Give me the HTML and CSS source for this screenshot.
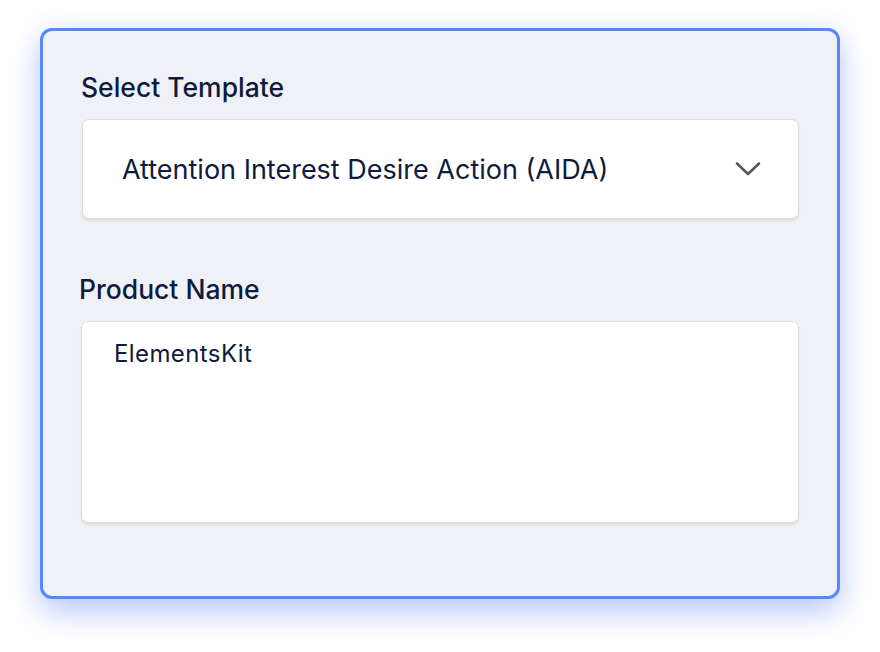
FILE: index.html
```html
<!DOCTYPE html>
<html lang="en">
<head>
<meta charset="utf-8">
<title>Template form</title>
<link rel="stylesheet" href="styles.css">
</head>
<body>
<div class="page">
  <div class="card">
    <div class="field">
      <div class="label label-first">Select Template</div>
      <div class="select">
        <span class="select-text">Attention Interest Desire Action (AIDA)</span>
        <svg class="chevron" width="26" height="16" viewBox="0 0 26 16" aria-hidden="true">
          <path d="M2 2.5 L13 13 L24 2.5" fill="none" stroke="#55575e" stroke-width="2.6" stroke-linecap="round" stroke-linejoin="round"/>
        </svg>
      </div>
    </div>
    <div class="field field-second">
      <div class="label label-second">Product Name</div>
      <div class="textarea">ElementsKit</div>
    </div>
  </div>
</div>
</body>
</html>
```
FILE: styles.css
```css
html, body {
  margin: 0;
  padding: 0;
  background: #ffffff;
}
.page {
  padding: 28px 40px 53px 40px;
  font-family: Inter, "Noto Sans", sans-serif;
  color: #0e1b3d;
}
.card {
  box-sizing: border-box;
  width: 800px;
  height: 571px;
  border: 3px solid #5588ff;
  border-radius: 12px;
  background: #f0f1f7;
  padding: 40px 38px 0 39px;
  box-shadow: 0 14px 30px rgba(90, 130, 255, 0.38), 0 0 24px rgba(120, 150, 255, 0.12);
}
.label {
  font-size: 26.5px;
  line-height: 32px;
  font-weight: 500;
  color: #0e1b3d;
}
.label-first {
  margin-left: -1px;
  margin-bottom: 16px;
}
.label-second {
  margin-left: -3px;
  margin-bottom: 16px;
}
.field-second {
  margin-top: 54px;
}
.select {
  box-sizing: border-box;
  height: 100px;
  background: #ffffff;
  border: 1px solid #dcdde2;
  border-radius: 7px;
  box-shadow: 0 2px 2px rgba(0, 0, 0, 0.08);
  display: flex;
  align-items: center;
  justify-content: space-between;
  padding: 0 37px 0 39px;
}
.select-text {
  font-size: 27px;
  color: #0e1b3d;
}
.chevron {
  display: block;
}
.textarea {
  box-sizing: border-box;
  height: 202px;
  margin-left: -1px;
  background: #ffffff;
  border: 1px solid #dcdde2;
  border-radius: 7px;
  box-shadow: 0 2px 2px rgba(0, 0, 0, 0.08);
  padding: 17px 32px;
  font-size: 24px;
  letter-spacing: 0.4px;
  line-height: 30px;
  color: #0e1b3d;
}
```
